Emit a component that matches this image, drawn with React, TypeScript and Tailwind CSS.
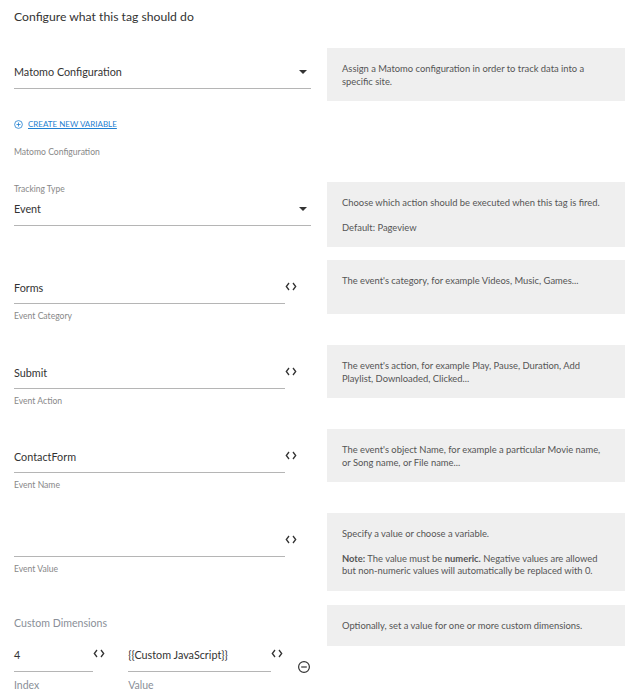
import type { ReactNode } from "react";

const font = { fontFamily: '"Lato", "Open Sans", sans-serif' };

function Caret() {
  return <span className="w-0 h-0 border-x-[4px] border-x-transparent border-t-[4px] border-t-[#333]"></span>;
}

function CodeIcon() {
  return (
    <svg width="12" height="9" viewBox="0 0 12 9" fill="none" stroke="#333" strokeWidth="1.3" className="shrink-0">
      <path d="M4 1 1.3 4.5 4 8" />
      <path d="M8 1l2.7 3.5L8 8" />
    </svg>
  );
}

function HelpBox({ children }: { children: ReactNode }) {
  return <div className="bg-[#efefef] px-[15px] pt-[15px] pb-[13px] text-[9.4px] leading-[12.5px] text-[#555]">{children}</div>;
}

function Row({ height, left, help }: { height: string; left: ReactNode; help: ReactNode }) {
  return (
    <div className={`grid grid-cols-[297px_298px] gap-x-4 ${height}`}>
      <div>{left}</div>
      <div>{help}</div>
    </div>
  );
}

function SelectField({ value, label, pad }: { value: string; label?: string; pad: string }) {
  return (
    <div>
      <div className={pad}>
        {label && <div className="text-[8.5px] leading-3 text-[#888]">{label}</div>}
      </div>
      <div className="flex items-center justify-between border-b border-[#b5b5b5] pb-[8px] pr-1 text-[10.8px] leading-4 text-[#333]">
        <span>{value}</span>
        <Caret />
      </div>
    </div>
  );
}

function TextField({ value, label }: { value: string; label: string }) {
  return (
    <div className="pt-5">
      <div className="flex items-start">
        <div className="h-[24px] w-[271px] border-b border-[#b5b5b5] text-[10.8px] leading-[15px] text-[#333]">{value || "\u00a0"}</div>
        <div className="mt-[2px]"><CodeIcon /></div>
      </div>
      <div className="mt-[6px] text-[8.6px] leading-3 text-[#888]">{label}</div>
    </div>
  );
}

export default function App() {
  return (
    <div className="h-[700px] w-[634px] overflow-hidden bg-white pl-[14px]" style={font}>
      <h2 className="pt-[9px] pb-[23px] text-[12.2px] leading-4 font-normal text-[#333]">Configure what this tag should do</h2>

      <Row
        height="h-[134px]"
        left={
          <div>
            <SelectField value="Matomo Configuration" pad="h-4" />
            <a className="mt-[29px] flex items-center gap-[5px] text-[8px] leading-3 text-[#1f7fd1] underline">
              <svg width="9" height="9" viewBox="0 0 9 9" fill="none" stroke="#1f7fd1" strokeWidth="0.8">
                <circle cx="4.5" cy="4.5" r="3.9" />
                <path d="M4.5 2.5v4M2.5 4.5h4" />
              </svg>
              CREATE NEW VARIABLE
            </a>
            <div className="mt-[16px] text-[8.6px] leading-3 text-[#888]">Matomo Configuration</div>
          </div>
        }
        help={<HelpBox>Assign a Matomo configuration in order to track data into a specific site.</HelpBox>}
      />

      <Row
        height="h-[78px]"
        left={<SelectField value="Event" label="Tracking Type" pad="h-[19px] pt-[1px]" />}
        help={
          <HelpBox>
            <p>Choose which action should be executed when this tag is fired.</p>
            <p className="mt-3">Default: Pageview</p>
          </HelpBox>
        }
      />

      <Row
        height="h-[85px]"
        left={<TextField value="Forms" label="Event Category" />}
        help={<HelpBox><div className="pb-[13px]">The event's category, for example Videos, Music, Games...</div></HelpBox>}
      />

      <Row
        height="h-[84px]"
        left={<TextField value="Submit" label="Event Action" />}
        help={<HelpBox>The event's action, for example Play, Pause, Duration, Add Playlist, Downloaded, Clicked...</HelpBox>}
      />

      <Row
        height="h-[84px]"
        left={<TextField value="ContactForm" label="Event Name" />}
        help={<HelpBox>The event's object Name, for example a particular Movie name, or Song name, or File name...</HelpBox>}
      />

      <Row
        height="h-[92px]"
        left={<TextField value="" label="Event Value" />}
        help={
          <HelpBox>
            <p>Specify a value or choose a variable.</p>
            <p className="mt-3">
              <strong>Note:</strong> The value must be <strong>numeric.</strong> Negative values are allowed but non-numeric values will automatically be replaced with 0.
            </p>
          </HelpBox>
        }
      />

      <Row
        height="h-[95px]"
        left={
          <div>
            <div className="pt-[11px] text-[10.6px] leading-[14px] text-[#8a8f98]">Custom Dimensions</div>
            <div className="mt-[17px] flex items-start">
              <div className="w-[80px]">
                <div className="h-[25px] border-b border-[#b5b5b5] text-[10.8px] leading-4 text-[#333]">4</div>
                <div className="mt-[5px] text-[10.5px] leading-4 text-[#8a8f98]">Index</div>
              </div>
              <div className="w-[35px] pt-[2px]"><CodeIcon /></div>
              <div className="w-[144px]">
                <div className="h-[25px] border-b border-[#b5b5b5] text-[10.8px] leading-4 text-[#333]">{"{{Custom JavaScript}}"}</div>
                <div className="mt-[5px] text-[10.5px] leading-4 text-[#8a8f98]">Value</div>
              </div>
              <div className="w-[26px] pt-[2px]"><CodeIcon /></div>
              <svg width="14" height="14" viewBox="0 0 14 14" fill="none" stroke="#333" strokeWidth="1.2" className="mt-[13px] shrink-0">
                <circle cx="7" cy="7" r="5.4" />
                <path d="M4.2 7h5.6" />
              </svg>
            </div>
          </div>
        }
        help={<HelpBox>Optionally, set a value for one or more custom dimensions.</HelpBox>}
      />
    </div>
  );
}
